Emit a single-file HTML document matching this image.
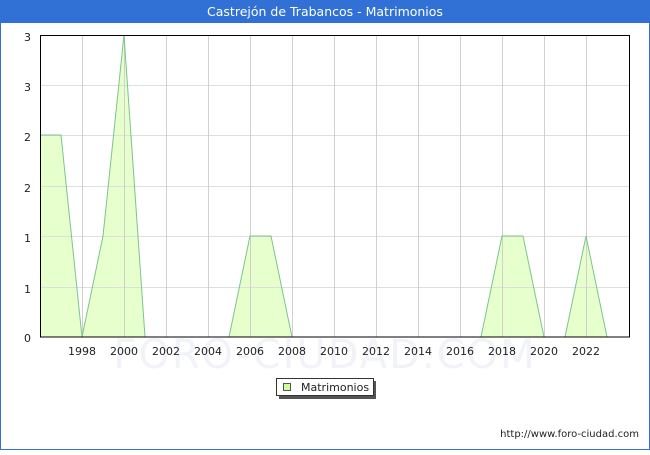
<!DOCTYPE html>
<html><head><meta charset="utf-8"><style>
html,body{margin:0;padding:0;background:#fff}
body{width:650px;height:450px;overflow:hidden}
text{font-family:"DejaVu Sans","Liberation Sans",sans-serif}
</style></head><body>
<svg width="650" height="450" xmlns="http://www.w3.org/2000/svg">
<rect x="0" y="0" width="650" height="450" fill="#fff"/>
<rect x="0.5" y="0.5" width="649" height="449" fill="none" stroke="#3171d5" stroke-width="1"/>
<rect x="0" y="0" width="650" height="23" fill="#3171d5"/>
<text x="325" y="16" fill="#fff" font-size="12.5" text-anchor="middle">Castrejón de Trabancos - Matrimonios</text>
<text x="325" y="368" fill="#f1f3f9" font-size="40" text-anchor="middle" letter-spacing="2">FORO-CIUDAD.COM</text>
<polygon fill="#e6ffcc" stroke="none" points="40,337 40,135 61,135 82,337 103,236 124,35 145,337 229,337 250,236 271,236 292,337 481,337 502,236 523,236 544,337 565,337 586,236 607,337"/>
<g stroke="#dcdcdc" stroke-width="1" opacity="0.9">
<line x1="40" y1="85.5" x2="630" y2="85.5"/>
<line x1="40" y1="135.5" x2="630" y2="135.5"/>
<line x1="40" y1="186.5" x2="630" y2="186.5"/>
<line x1="40" y1="236.5" x2="630" y2="236.5"/>
<line x1="40" y1="287.5" x2="630" y2="287.5"/>
</g>
<g stroke="#cccccc" stroke-width="1" opacity="0.9">
<line x1="82.5" y1="35" x2="82.5" y2="337"/>
<line x1="124.5" y1="35" x2="124.5" y2="337"/>
<line x1="166.5" y1="35" x2="166.5" y2="337"/>
<line x1="208.5" y1="35" x2="208.5" y2="337"/>
<line x1="250.5" y1="35" x2="250.5" y2="337"/>
<line x1="292.5" y1="35" x2="292.5" y2="337"/>
<line x1="334.5" y1="35" x2="334.5" y2="337"/>
<line x1="376.5" y1="35" x2="376.5" y2="337"/>
<line x1="418.5" y1="35" x2="418.5" y2="337"/>
<line x1="460.5" y1="35" x2="460.5" y2="337"/>
<line x1="502.5" y1="35" x2="502.5" y2="337"/>
<line x1="544.5" y1="35" x2="544.5" y2="337"/>
<line x1="586.5" y1="35" x2="586.5" y2="337"/>
</g>
<polyline fill="none" stroke="#7cc48c" stroke-width="1" points="40,135 61,135 82,337 103,236 124,35 145,337 229,337 250,236 271,236 292,337 481,337 502,236 523,236 544,337 565,337 586,236 607,337"/>
<rect x="40.5" y="35.5" width="589" height="301.5" fill="none" stroke="#000" stroke-width="1"/>
<g font-size="11" fill="#222" text-anchor="end">
<text x="31" y="41">3</text>
<text x="31" y="91">3</text>
<text x="31" y="141">2</text>
<text x="31" y="192">2</text>
<text x="31" y="242">1</text>
<text x="31" y="293">1</text>
<text x="31" y="342">0</text>
</g>
<g font-size="11" fill="#222" text-anchor="middle">
<text x="82" y="355">1998</text>
<text x="124" y="355">2000</text>
<text x="166" y="355">2002</text>
<text x="208" y="355">2004</text>
<text x="250" y="355">2006</text>
<text x="292" y="355">2008</text>
<text x="334" y="355">2010</text>
<text x="376" y="355">2012</text>
<text x="418" y="355">2014</text>
<text x="460" y="355">2016</text>
<text x="502" y="355">2018</text>
<text x="544" y="355">2020</text>
<text x="586" y="355">2022</text>
</g>
<rect x="279" y="381" width="97" height="18" fill="#555"/>
<rect x="276.5" y="378.5" width="97" height="17" fill="#fff" stroke="#333" stroke-width="1"/>
<rect x="283.5" y="383.5" width="7" height="7" fill="#ccff99" stroke="#555" stroke-width="1"/>
<text x="301" y="391" font-size="11" fill="#222">Matrimonios</text>
<text x="639" y="437" font-size="10" fill="#222" text-anchor="end">http://www.foro-ciudad.com</text>
</svg>
</body></html>
